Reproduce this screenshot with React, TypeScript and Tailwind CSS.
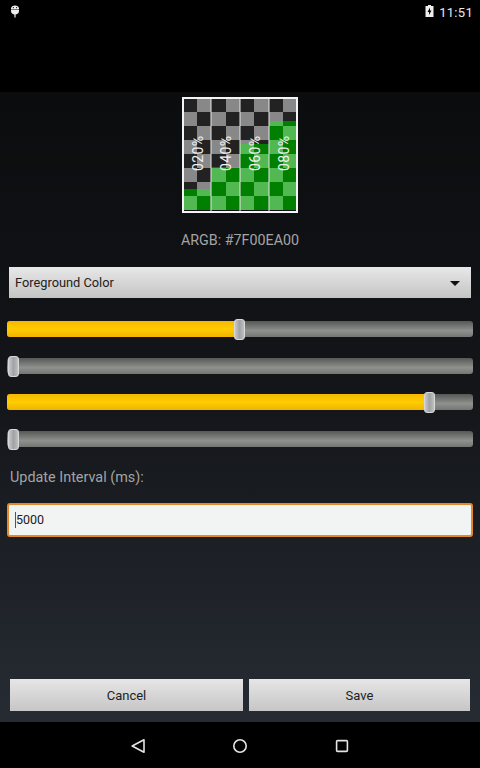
const rows = [0, 1, 2, 3, 4, 5, 6, 7];
const cols = [0, 1, 2, 3, 4, 5, 6, 7];

// x edges of the checker cells inside the preview
const xEdges = [1, 15, 29, 44, 58, 72, 87, 101, 115];

// one column of the preview widget: y is where the green starts
const levels = [
  { label: "020%", y: 92 },
  { label: "040%", y: 70 },
  { label: "060%", y: 47 },
  { label: "080%", y: 24 },
];

function Preview() {
  return (
    <svg width="116" height="116" viewBox="0 0 116 116" className="block">
      {rows.map((r) =>
        cols.map((c) => {
          const dark = (r + c) % 2 === 0;
          const lvl = levels[Math.floor(c / 2)];
          const top = 1 + r * 14;
          const left = xEdges[c];
          const w = xEdges[c + 1] - left;
          const greenFrom = Math.max(top, lvl.y);
          const greenH = top + 14 - greenFrom;
          return (
            <g key={`${r}-${c}`}>
              <rect x={left} y={top} width={w} height="14" fill={dark ? "#222222" : "#888888"} />
              {greenH > 0 && (
                <rect x={left} y={greenFrom} width={w} height={greenH} fill={dark ? "#007f00" : "#52b852"} />
              )}
            </g>
          );
        })
      )}
      {[29, 58, 87].map((x) => (
        <rect key={x} x={x - 0.5} y="2" width="1" height="112" fill="#e8e8e8" />
      ))}
      <rect x="1" y="1" width="114" height="114" fill="none" stroke="#f4f4f4" strokeWidth="2" />
      {levels.map((l, i) => (
        <text
          key={l.label}
          transform={`translate(${20.5 + i * 28.7} 74) rotate(-90)`}
          fill="#f0f0f0"
          fontSize="14"
          fontFamily="Roboto, sans-serif"
          letterSpacing="0.4"
        >
          {l.label}
        </text>
      ))}
    </svg>
  );
}

function Slider({ pct, className }: { pct: number; className: string }) {
  return (
    <div className={`relative h-4 mx-[7px] rounded-[3px] bg-gradient-to-b from-[#565856] via-[#8f918f] via-60% to-[#747674] ${className}`}>
      {pct > 0 && (
        <div
          className="h-full rounded-l-[3px] bg-gradient-to-b from-[#f5b800] via-[#ffcc00] to-[#f0b400]"
          style={{ width: `${pct}%` }}
        />
      )}
      <div
        className="absolute top-[-2px] w-[11px] h-[21px] -ml-[6px] rounded-[3px] border border-[#d8d8d8] bg-gradient-to-r from-[#c8c8c8] via-[#a0a2a6] to-[#c0c0c0]"
        style={{ left: `${pct + (pct === 0 ? 1.5 : 0)}%` }}
      />
    </div>
  );
}

function StatusBar() {
  return (
    <div className="h-[92px] bg-black text-[#e8e8e8]">
      <div className="h-6 flex items-center pl-[10px] pr-[7px]">
        <svg width="10" height="13" viewBox="0 0 10 13" fill="#eeeeee" className="-mt-[2px]">
          <path d="M1 3.5C1 1.5 3 .5 5 .5s4 1 4 3v.5H1z" />
          <path d="M1 4.6h8V6c0 2-1.5 3.5-4 3.5S1 8 1 6z" />
          <rect x="4.4" y="9" width="1.2" height="3.5" />
          <circle cx="3.4" cy="2.6" r=".6" fill="#000" />
          <circle cx="6.6" cy="2.6" r=".6" fill="#000" />
        </svg>
        <div className="flex-1" />
        <svg width="9" height="12" viewBox="0 0 9 12" fill="#eeeeee" className="mr-[5px] -mt-[3px]">
          <path d="M3 0h3v1h2.5v11H.5V1H3z" />
          <path d="M5 2.5 2.5 7H4v3l2.5-4.5H5z" fill="#000" />
        </svg>
        <span className="text-[13px] leading-none tracking-[0.3px]">11:51</span>
      </div>
    </div>
  );
}

function NavBar() {
  return (
    <div className="h-[46px] bg-black flex items-center justify-center gap-[86px] pt-[1px]">
      <svg width="16" height="16" viewBox="0 0 16 16" fill="none" stroke="#e4e4e4" strokeWidth="1.6">
        <path d="M14 1.8v12.4L2.2 8z" strokeLinejoin="round" />
      </svg>
      <svg width="16" height="16" viewBox="0 0 16 16" fill="none" stroke="#e4e4e4" strokeWidth="1.6">
        <circle cx="8" cy="8" r="6.2" />
      </svg>
      <svg width="16" height="16" viewBox="0 0 16 16" fill="none" stroke="#e4e4e4" strokeWidth="1.6">
        <rect x="2.6" y="2.6" width="10.8" height="10.8" rx="1" />
      </svg>
    </div>
  );
}

export default function App() {
  return (
    <div className="w-[480px] h-[768px] flex flex-col overflow-hidden font-['Roboto',sans-serif]">
      <StatusBar />
      <div className="flex-1 flex flex-col bg-gradient-to-b from-[#0b0c0e] via-[#14161a] to-[#272c34]">
        <div className="flex justify-center pt-[5px]">
          <Preview />
        </div>
        <p className="mt-[17px] text-center text-[14.3px] leading-5 text-[#a4a4a4]">ARGB: #7F00EA00</p>
        <div className="mt-[17px] mx-[9px] h-[31px] flex items-center justify-between pl-[6px] pr-[11px] pt-[1px] bg-gradient-to-b from-[#e8e8e8] to-[#c4c4c4] text-[12.8px] text-[#222222]">
          <span>Foreground Color</span>
          <span className="w-0 h-0 border-x-[5px] border-x-transparent border-t-[5px] border-t-[#111111]" />
        </div>
        <Slider pct={50} className="mt-[23px]" />
        <Slider pct={0} className="mt-[21px]" />
        <Slider pct={90.7} className="mt-[20px]" />
        <Slider pct={0} className="mt-[21px]" />
        <p className="mt-[21px] ml-[10px] text-[14.4px] leading-5 text-[#a4a4a4]">Update Interval (ms):</p>
        <div className="mt-[15px] mx-[7px] h-[34px] flex items-center pl-[6px] rounded-[3px] border-2 border-[#e08a2c] bg-[#f2f3f3] text-[12.5px] text-[#222222]">
          <span className="border-l border-[#44586a] leading-4">5000</span>
        </div>
        <div className="flex-1" />
        <div className="flex gap-[6px] ml-[10px] mr-[10px] mb-[11px]">
          <button className="w-[233px] h-[32px] pt-[1px] bg-gradient-to-b from-[#e6e6e6] to-[#c6c6c6] text-[13px] text-[#222222]">Cancel</button>
          <button className="flex-1 h-[32px] pt-[1px] bg-gradient-to-b from-[#e6e6e6] to-[#c6c6c6] text-[13px] text-[#222222]">Save</button>
        </div>
      </div>
      <NavBar />
    </div>
  );
}
